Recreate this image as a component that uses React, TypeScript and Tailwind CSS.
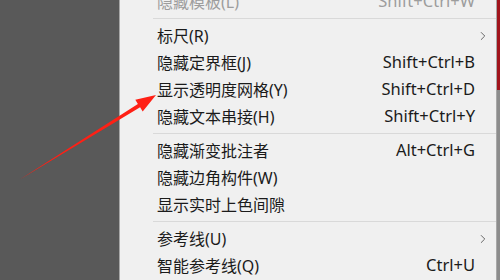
import { ChevronRight } from 'lucide-react';

type Item =
  | { kind: 'sep' }
  | { kind: 'item'; label: string; shortcut?: string; sub?: boolean; disabled?: boolean };

const items: Item[] = [
  { kind: 'item', label: '隐藏模板(L)', shortcut: 'Shift+Ctrl+W', disabled: true },
  { kind: 'sep' },
  { kind: 'item', label: '标尺(R)', sub: true },
  { kind: 'item', label: '隐藏定界框(J)', shortcut: 'Shift+Ctrl+B' },
  { kind: 'item', label: '显示透明度网格(Y)', shortcut: 'Shift+Ctrl+D' },
  { kind: 'item', label: '隐藏文本串接(H)', shortcut: 'Shift+Ctrl+Y' },
  { kind: 'sep' },
  { kind: 'item', label: '隐藏渐变批注者', shortcut: 'Alt+Ctrl+G' },
  { kind: 'item', label: '隐藏边角构件(W)' },
  { kind: 'item', label: '显示实时上色间隙' },
  { kind: 'sep' },
  { kind: 'item', label: '参考线(U)', sub: true },
  { kind: 'item', label: '智能参考线(Q)', shortcut: 'Ctrl+U' },
];

export default function App() {
  return (
    <div
      className="relative flex w-[500px] h-[280px] overflow-hidden bg-[#595959]"
      style={{ fontFamily: '"Noto Sans", "Noto Sans CJK SC", sans-serif' }}
    >
      {/* 왼쪽 캔버스 영역 */}
      <div className="w-[119px] shrink-0 bg-[#595959]" />

      {/* 메뉴 */}
      <div className="flex-1 border-l border-r border-[#a8a8a8] bg-[#f0f0f0]">
        <div className="-mt-[12px] flex flex-col">
          {items.map((it, i) =>
            it.kind === 'sep' ? (
              <div key={i} className="h-[7px] flex items-center pl-[33px]">
                <div className="h-px w-full bg-[#d9d9d9]" />
              </div>
            ) : (
              <div
                key={i}
                className={
                  'h-[27px] flex items-center pl-[37px] pr-[21px] text-[16px] ' +
                  (it.disabled ? 'text-[#9d9d9d]' : 'text-[#1b1b1b]')
                }
              >
                <span className="flex-1 whitespace-nowrap">{it.label}</span>
                {it.shortcut && (
                  <span className="whitespace-nowrap text-[16.5px]">{it.shortcut}</span>
                )}
                {it.sub && (
                  <ChevronRight className="w-[14px] h-[14px] -mr-[15px] text-[#555]" strokeWidth={1.5} />
                )}
              </div>
            ),
          )}
        </div>
      </div>

      {/* 오른쪽 가장자리 */}
      <div className="w-[3px] shrink-0 flex flex-col">
        <div className="h-[90px] bg-[#a0141b]" />
        <div className="flex-1 bg-[#8c8c8c]" />
      </div>

      {/* 빨간 화살표 */}
      <svg className="absolute inset-0 pointer-events-none" width="500" height="280" viewBox="0 0 500 280">
        <polygon
          points="19,180 137.9,103.9 135.3,99.7 156,95 142.7,111.5 140.1,107.3"
          fill="#ff2015"
        />
      </svg>
    </div>
  );
}
